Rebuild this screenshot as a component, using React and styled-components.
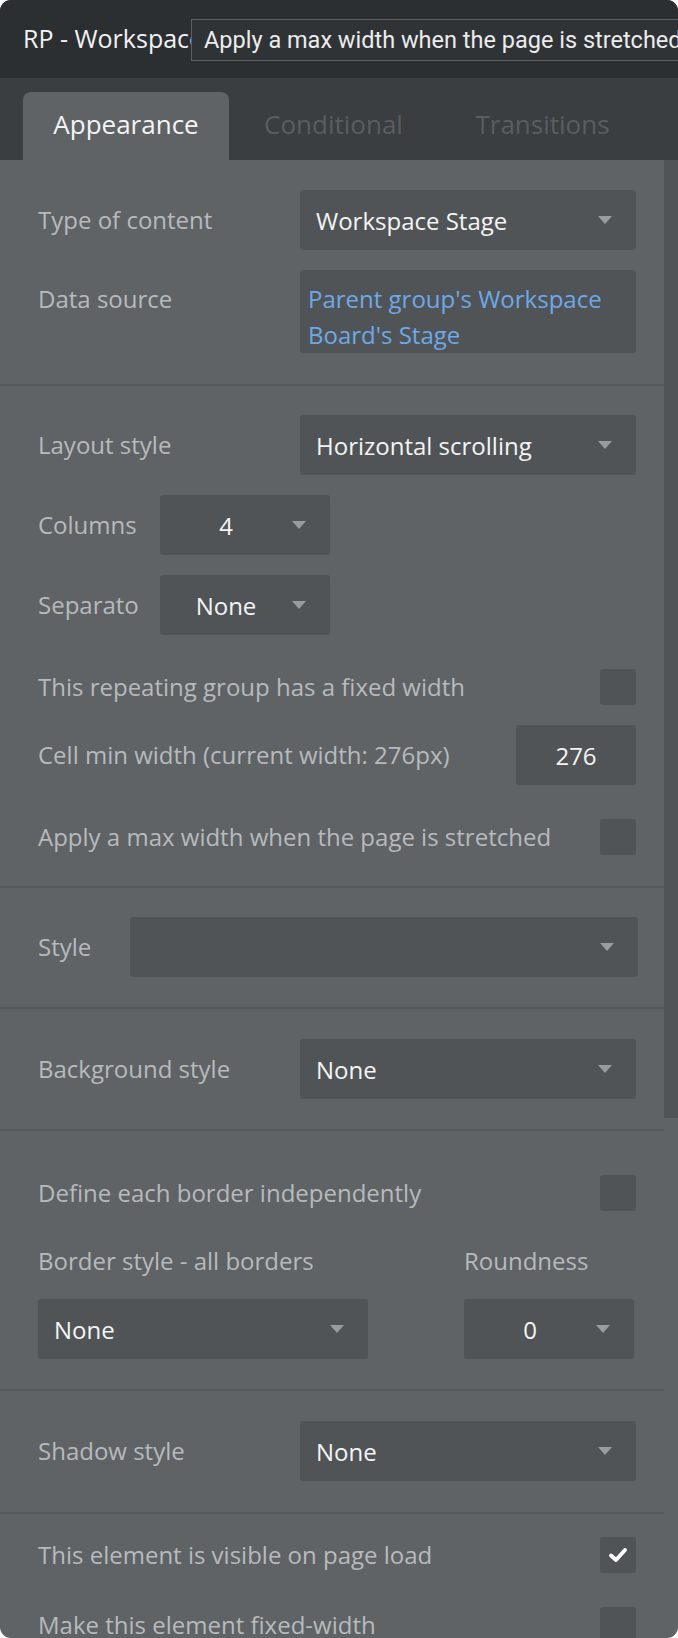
import React from 'react'
import styled, { createGlobalStyle } from 'styled-components'

const GlobalStyle = createGlobalStyle`
  html, body {
    margin: 0;
    padding: 0;
    background: #ffffff;
  }
  * {
    box-sizing: border-box;
  }
`

const Arrow = () => (
  <svg width="14" height="8" viewBox="0 0 14 8">
    <polygon points="0,0 14,0 7,8" fill="#9a9da0" />
  </svg>
)

const Check = () => (
  <svg width="20" height="16" viewBox="0 0 20 16">
    <polyline
      points="3,8.5 8,13 17,3"
      fill="none"
      stroke="#ffffff"
      strokeWidth="3.8"
      strokeLinecap="round"
      strokeLinejoin="round"
    />
  </svg>
)

const Dropdown = ({ value, small, center, wide }) => (
  <Select small={small} wide={wide}>
    <Value center={center}>{value}</Value>
    <Arrow />
  </Select>
)

export const App = () => (
  <>
    <GlobalStyle />
    <Panel>
      <Header>
        <Title>RP - Workspace Stage Repeating Group</Title>
        <Tooltip>Apply a max width when the page is stretched</Tooltip>
      </Header>

      <Tabs>
        <Tab active>Appearance</Tab>
        <Tab>Conditional</Tab>
        <Tab>Transitions</Tab>
      </Tabs>

      <Body>
        <Content>
          <Section top={30} bottom={31}>
            <Row>
              <Label width={262}>Type of content</Label>
              <Dropdown value="Workspace Stage" />
            </Row>
            <Row top>
              <Label width={262} pad={11}>Data source</Label>
              <Expression>Parent group's Workspace Board's Stage</Expression>
            </Row>
          </Section>

          <Section top={29} bottom={31}>
            <Row>
              <Label width={262}>Layout style</Label>
              <Dropdown value="Horizontal scrolling" />
            </Row>
            <Row>
              <Label width={122}>Columns</Label>
              <Dropdown value="4" small center />
            </Row>
            <Row>
              <Label width={122}>Separato</Label>
              <Dropdown value="None" small center />
            </Row>
            <CheckRow>
              <Label>This repeating group has a fixed width</Label>
              <Box />
            </CheckRow>
            <Row>
              <Label>Cell min width (current width: 276px)</Label>
              <NumberInput>276</NumberInput>
            </Row>
            <CheckRow>
              <Label>Apply a max width when the page is stretched</Label>
              <Box />
            </CheckRow>
          </Section>

          <Section top={29} bottom={30}>
            <Row>
              <Label width={92}>Style</Label>
              <Dropdown value="" wide />
            </Row>
          </Section>

          <Section top={30} bottom={30}>
            <Row>
              <Label width={262}>Background style</Label>
              <Dropdown value="None" />
            </Row>
          </Section>

          <Section top={30} bottom={30}>
            <CheckRow>
              <Label>Define each border independently</Label>
              <Box />
            </CheckRow>
            <Split>
              <Column>
                <Heading>Border style - all borders</Heading>
                <Dropdown value="None" />
              </Column>
              <Column narrow>
                <Heading>Roundness</Heading>
                <Dropdown value="0" center />
              </Column>
            </Split>
          </Section>

          <Section top={30} bottom={31}>
            <Row>
              <Label width={262}>Shadow style</Label>
              <Dropdown value="None" />
            </Row>
          </Section>

          <Section top={9} bottom={0} last>
            <CheckRow>
              <Label>This element is visible on page load</Label>
              <Box><Check /></Box>
            </CheckRow>
            <CheckRow>
              <Label>Make this element fixed-width</Label>
              <Box />
            </CheckRow>
          </Section>
        </Content>

        <Gutter>
          <Thumb />
        </Gutter>
      </Body>
    </Panel>
  </>
)

export default App

/**
 * --------------------------------------------------------
 * UI
 * --------------------------------------------------------
 */
const Panel = styled.div`
  width: 678px;
  height: 1638px;
  border-radius: 11px;
  overflow: hidden;
  background: #5f6366;
  display: flex;
  flex-direction: column;
  font-family: "Open Sans", "Noto Sans", sans-serif;
`

const Header = styled.div`
  position: relative;
  height: 78px;
  flex: none;
  background: #2b2f32;
  display: flex;
  align-items: center;
  padding: 0 24px 2px 23px;
`

const Title = styled.div`
  color: #f2f2f2;
  font-size: 25px;
  white-space: nowrap;
  overflow: hidden;
`

const Tooltip = styled.div`
  position: absolute;
  left: 191px;
  top: 19px;
  height: 42px;
  padding: 0 12px;
  display: flex;
  align-items: center;
  white-space: nowrap;
  background: #303336;
  border: 1px solid #5c5f62;
  color: #ececec;
  font-family: Roboto, "Liberation Sans", sans-serif;
  font-size: 23.5px;
`

const Tabs = styled.div`
  height: 82px;
  flex: none;
  background: #3a3e41;
  display: flex;
  align-items: flex-end;
  padding-left: 23px;
`

const Tab = styled.div`
  height: 68px;
  width: ${p => (p.active ? '206px' : '209px')};
  display: flex;
  align-items: center;
  justify-content: center;
  border-radius: 8px 8px 0 0;
  background: ${p => (p.active ? '#5f6366' : 'transparent')};
  color: ${p => (p.active ? '#f4f4f4' : '#595d61')};
  font-size: 26px;
  padding-bottom: 4px;
`

const Body = styled.div`
  flex: 1;
  display: flex;
  min-height: 0;
`

const Content = styled.div`
  flex: 1;
  display: flex;
  flex-direction: column;
`

const Gutter = styled.div`
  width: 14px;
  flex: none;
`

const Thumb = styled.div`
  height: 958px;
  background: #505457;
`

const Section = styled.div`
  display: flex;
  flex-direction: column;
  gap: 20px;
  padding: ${p => p.top}px 28px ${p => p.bottom}px 38px;
  border-bottom: ${p => (p.last ? 'none' : '2px solid #56595c')};
`

const Row = styled.div`
  display: flex;
  align-items: ${p => (p.top ? 'flex-start' : 'center')};
`

const CheckRow = styled.div`
  display: flex;
  align-items: center;
  justify-content: space-between;
  margin-top: 14px;
`

const Label = styled.div`
  flex: ${p => (p.width ? 'none' : '1')};
  width: ${p => (p.width ? `${p.width}px` : 'auto')};
  padding-top: ${p => p.pad || 0}px;
  color: #b7babc;
  font-size: 24px;
  line-height: 36px;
  white-space: nowrap;
  overflow: hidden;
`

const Select = styled.div`
  height: 60px;
  flex: ${p => (p.small ? 'none' : '1 1 auto')};
  width: ${p => (p.small ? '170px' : 'auto')};
  margin-right: ${p => (p.wide ? '-2px' : '0')};
  display: flex;
  align-items: center;
  padding: 0 24px 0 16px;
  background: #505457;
  border-radius: 3px;
  color: #f4f4f4;
  font-size: 24px;
  white-space: nowrap;
`

const Value = styled.span`
  flex: 1;
  text-align: ${p => (p.center ? 'center' : 'left')};
  margin-left: ${p => (p.center ? '-16px' : '0')};
`

const Expression = styled.div`
  flex: 1;
  min-height: 83px;
  padding: 11px 8px 0;
  background: #505457;
  border-radius: 3px;
  color: #6fa8e6;
  font-size: 24px;
  line-height: 36px;
`

const NumberInput = styled.div`
  width: 120px;
  height: 60px;
  flex: none;
  display: flex;
  align-items: center;
  justify-content: center;
  background: #505457;
  border-radius: 3px;
  color: #f4f4f4;
  font-size: 24px;
`

const Box = styled.div`
  width: 36px;
  height: 36px;
  flex: none;
  display: flex;
  align-items: center;
  justify-content: center;
  background: #505457;
  border-radius: 3px;
`

const Split = styled.div`
  display: flex;
  justify-content: space-between;
  margin-top: 12px;
  margin-right: 2px;
`

const Column = styled.div`
  display: flex;
  flex-direction: column;
  gap: 20px;
  width: ${p => (p.narrow ? '170px' : '330px')};
`

const Heading = styled.div`
  color: #b7babc;
  font-size: 24px;
  line-height: 36px;
  white-space: nowrap;
`
